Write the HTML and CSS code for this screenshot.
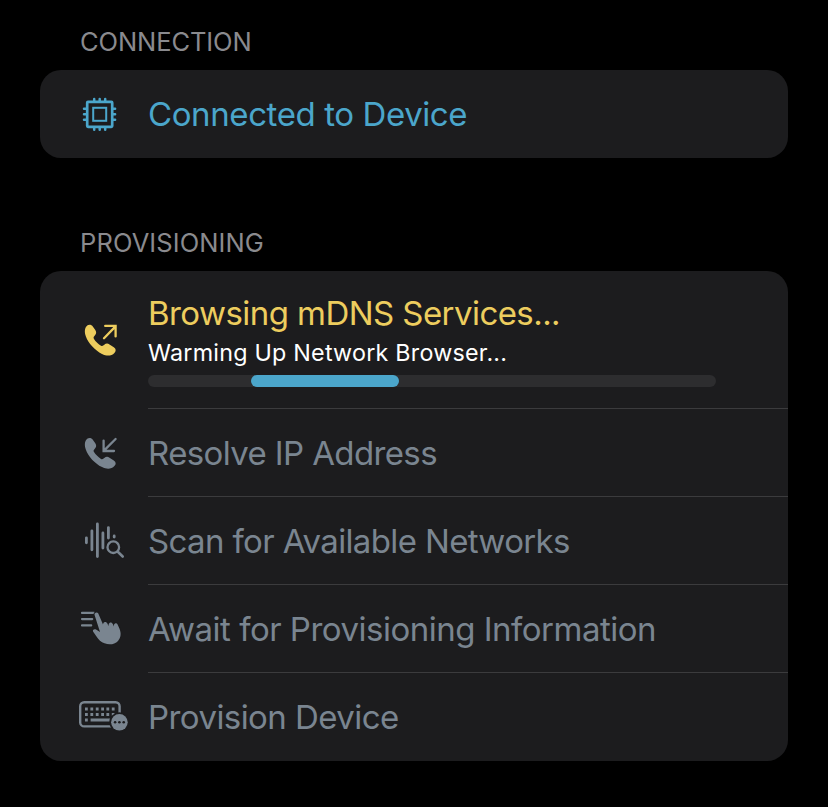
FILE: index.html
```html
<!DOCTYPE html>
<html lang="en">
<head>
<meta charset="utf-8">
<title>Provisioning</title>
<link rel="stylesheet" href="styles.css">
</head>
<body>
<main class="page">
  <section class="group">
    <h2 class="heading connection">CONNECTION</h2>
    <div class="card">
      <div class="row blue">
        <svg class="icon" viewBox="0 -1 60 60" fill="none" stroke="currentColor">
          <rect x="17.2" y="16.9" width="25" height="25" rx=".8" stroke-width="2.7"/>
          <rect x="23.2" y="22.8" width="13" height="13" stroke-width="2"/>
          <path stroke-width="2.5" stroke-linecap="round" d="M24.2 16v-2M29.7 16v-2M35.2 16v-2M24.2 43v1.8M29.7 43v1.8M35.2 43v1.8M16 23.8h-2M16 29.3h-2M16 34.8h-2M43.3 23.8h1.8M43.3 29.3h1.8M43.3 34.8h1.8"/>
        </svg>
        <div class="body"><span class="title t-connected">Connected to Device</span></div>
      </div>
    </div>
  </section>
  <section class="group">
    <h2 class="heading provisioning">PROVISIONING</h2>
    <div class="card">
      <div class="row tall yellow">
        <svg class="icon" viewBox="0 0 60 60">
          <path fill="currentColor" d="M17.2 15.6C18.8 14.2 21.4 14.4 22.6 16.2L25.3 20C26.6 22 26.4 23.7 25 25.3L24 26.5C23.4 27.3 23.5 28 24 28.9C25.5 31.4 28.6 34.3 31 35.7C31.8 36.2 32.5 36.2 33.2 35.6L34.3 34.7C36 33.4 37.6 33.2 39.5 34.5L43.8 37.3C46.2 39 46.2 41 44.4 42.9C41.5 46 37 46.5 32 43.9C24.8 40.2 18.3 33.3 15.8 26.2C14.3 21.9 14.6 18 17.2 15.6Z"/>
          <path fill="none" stroke="currentColor" stroke-width="2.3" stroke-linecap="round" stroke-linejoin="miter" d="M34 28.2L45.3 16.6M35.2 15.9H45.6V26.4"/>
        </svg>
        <div class="body">
          <span class="title t-browse">Browsing mDNS Services...</span>
          <span class="subtitle">Warming Up Network Browser...</span>
          <div class="track"><div class="bar"></div></div>
        </div>
      </div>
      <div class="row">
        <svg class="icon" viewBox="0 -2 60 60">
          <path transform="translate(0 -1.8)" fill="currentColor" d="M17.2 15.6C18.8 14.2 21.4 14.4 22.6 16.2L25.3 20C26.6 22 26.4 23.7 25 25.3L24 26.5C23.4 27.3 23.5 28 24 28.9C25.5 31.4 28.6 34.3 31 35.7C31.8 36.2 32.5 36.2 33.2 35.6L34.3 34.7C36 33.4 37.6 33.2 39.5 34.5L43.8 37.3C46.2 39 46.2 41 44.4 42.9C41.5 46 37 46.5 32 43.9C24.8 40.2 18.3 33.3 15.8 26.2C14.3 21.9 14.6 18 17.2 15.6Z"/>
          <path fill="none" stroke="currentColor" stroke-width="2.3" stroke-linecap="round" d="M45.6 14L34 25.6M33.6 15.6V26H44"/>
        </svg>
        <div class="body"><span class="title t-resolve">Resolve IP Address</span></div>
      </div>
      <div class="row">
        <svg class="icon" viewBox="0 -1 60 60" fill="none" stroke="currentColor" stroke-width="2.8" stroke-linecap="round">
          <path d="M16.4 25.8v5M21.9 18.8v19M27.4 12v32.5M32.9 21v15M38.4 15.6V26M44.2 24v1"/>
          <circle cx="43.3" cy="35.2" r="8.2" fill="#1c1c1e" stroke="none"/>
          <circle cx="43.3" cy="35.2" r="5.8" stroke-width="2.3"/>
          <path stroke-width="2.6" d="M47.8 39.8L52.7 44.5"/>
        </svg>
        <div class="body"><span class="title t-scan">Scan for Available Networks</span></div>
      </div>
      <div class="row">
        <svg class="icon" viewBox="0 -1 60 60">
          <path fill="none" stroke="currentColor" stroke-width="2.2" stroke-linecap="round" d="M12 12.9h12M12 19.1h10.2M12 25.4h9.2"/>
          <path fill="currentColor" stroke="#1c1c1e" stroke-width="2" paint-order="stroke" d="M24.5 14.7C24.2 12.5 27.2 11.5 28.3 13.5L33 24.5C33.3 23.8 33.1 22.8 34.3 22.2C35.8 21.7 36.8 22.4 37.4 23.6L38.6 26.2C38.6 25 38.4 23.3 39.8 22.7C41.2 22.3 42.2 22.9 42.8 24.1L44.1 26.7C43.9 25.3 43.8 24 45.1 23.4C46.2 23 47.1 23.4 47.6 24.4L49.4 28.6C51.4 33.2 51 37.7 48 40.9C44.7 44.4 39.5 45.1 34.5 43.3C31 42 28.6 39.5 26.5 36.4L23.2 31.8C22.1 30.1 24 28.5 26 29.4L30 32Z"/>
        </svg>
        <div class="body"><span class="title t-await">Await for Provisioning Information</span></div>
      </div>
      <div class="row">
        <svg class="icon" viewBox="0 -1 60 60" overflow="visible">
          <rect x="10.2" y="14.2" width="39.4" height="24.2" rx="4" fill="none" stroke="currentColor" stroke-width="2.4"/>
          <path fill="none" stroke="currentColor" stroke-width="2.8" d="M15 21h2.8M20.4 21h2.8M25.8 21h2.8M31.2 21h2.8M36.4 21h2.8M41.8 21h2.8M15 26.5h2.8M20.4 26.5h2.8M25.8 26.5h2.8M31.2 26.5h2.8M36.4 26.5h2.8M41.8 26.5h2.8M15 32h2.8M20.6 32H40"/>
          <circle cx="49.4" cy="34.3" r="10.1" fill="#1c1c1e"/>
          <circle cx="49.4" cy="34.3" r="8.3" fill="currentColor"/>
          <g fill="#1c1c1e"><circle cx="45.1" cy="34.3" r="1.3"/><circle cx="49.4" cy="34.3" r="1.3"/><circle cx="53.7" cy="34.3" r="1.3"/></g>
        </svg>
        <div class="body"><span class="title t-provision">Provision Device</span></div>
      </div>
    </div>
  </section>
</main>
</body>
</html>
```
FILE: styles.css
```css
* { box-sizing: border-box; }
body {
  margin: 0;
  background: #000;
  font-family: Inter, "Liberation Sans", sans-serif;
}
.page {
  display: flex;
  flex-direction: column;
  gap: 69px;
  padding: 26px 40px 0;
}
.heading {
  margin: 0 0 12px;
  padding-left: 40px;
  font-size: 25.5px;
  line-height: 32px;
  height: 32px;
  font-weight: 400;
  color: #8a8a8e;
}
.connection { letter-spacing: -0.1px; }
.provisioning { letter-spacing: 0.1px; }
.card {
  background: #1c1c1e;
  border-radius: 21px;
  overflow: hidden;
}
.row {
  display: flex;
  height: 88px;
  padding-left: 30px;
  gap: 18px;
  color: #7a8590;
}
.row.tall { height: 138px; }
.row.blue { color: #4ba6cb; }
.row.yellow { color: #edcd5e; }
.icon {
  flex: none;
  width: 60px;
  height: 60px;
  align-self: center;
}
.body {
  flex: 1;
  display: flex;
  flex-direction: column;
  justify-content: center;
  border-bottom: 1px solid #3b3b3d;
}
.row:last-child .body { border-bottom-color: transparent; }
.tall .body { justify-content: flex-start; padding-top: 21px; }
.title {
  font-size: 33px;
  line-height: 42px;
  white-space: nowrap;
  font-weight: 400;
}
.t-connected { letter-spacing: -0.4px; }
.t-browse { letter-spacing: -0.56px; }
.t-resolve { letter-spacing: -0.62px; }
.t-scan { letter-spacing: -0.64px; }
.t-await { letter-spacing: -0.5px; }
.t-provision { letter-spacing: -0.56px; }
.subtitle {
  font-size: 23.3px;
  line-height: 30px;
  margin-top: 4px;
  letter-spacing: 0.23px;
  color: #fff;
  white-space: nowrap;
}
.track {
  width: 568px;
  height: 12px;
  margin-top: 7px;
  border-radius: 6px;
  background: #2d2d2f;
}
.bar {
  width: 148px;
  height: 12px;
  margin-left: 103px;
  border-radius: 6px;
  background: #4ba6cb;
}
```
